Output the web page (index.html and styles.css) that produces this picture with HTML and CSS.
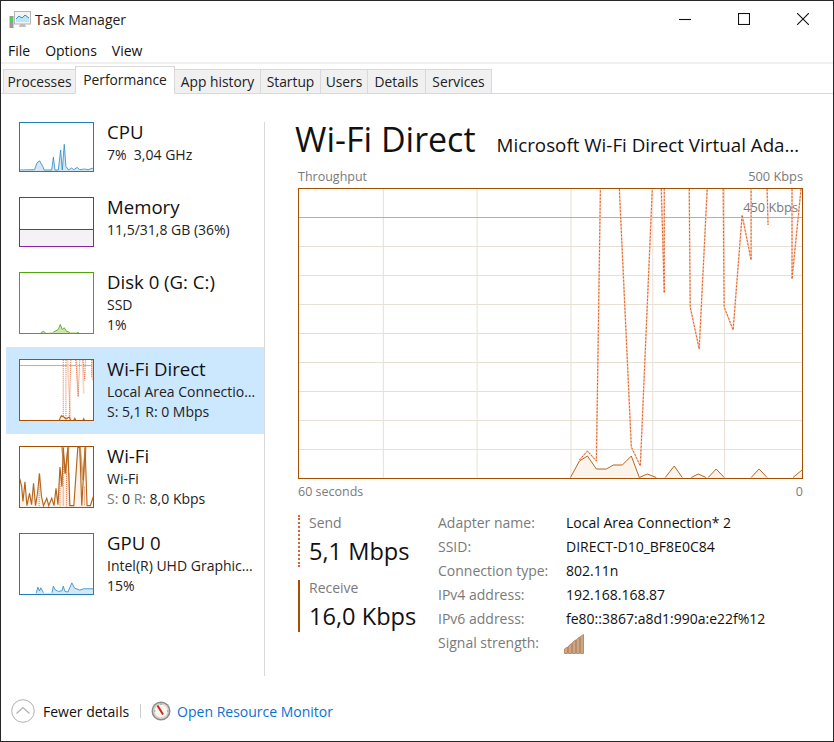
FILE: index.html
```html
<!DOCTYPE html>
<html lang="en">
<head>
<meta charset="utf-8">
<title>Task Manager</title>
<link rel="stylesheet" href="styles.css">
</head>
<body>
<div class="window">
  <header class="titlebar">
    <svg class="app-icon" viewBox="0 0 22 20" aria-hidden="true">
      <rect x="0.5" y="6" width="4" height="12" fill="#9a9a9a"/>
      <rect x="1" y="8" width="3" height="3" fill="#4fd14f"/>
      <rect x="5.5" y="1.5" width="16" height="12.5" fill="#f4f4f4" stroke="#b5b5b5"/>
      <path class="app-screen" d="M7 12V9l3-3 3 2 3-3 4 3v4z"/>
      <path class="app-line" d="M7 9l3-3 3 2 3-3 4 3"/>
      <path class="app-stand" d="M11 14h5l1 3h-7z"/>
    </svg>
    <span class="app-title">Task Manager</span>
    <div class="controls">
      <svg class="ctl" viewBox="0 0 12 12"><path d="M0 6.500h12"/></svg>
      <svg class="ctl" viewBox="0 0 12 12"><rect x="0.5" y="0.5" width="11" height="11"/></svg>
      <svg class="ctl" viewBox="0 0 12 12"><path d="M0 0l12 12M12 0L0 12"/></svg>
    </div>
  </header>
  <nav class="menubar"><span>File</span><span>Options</span><span>View</span></nav>
  <div class="tabs">
    <span class="tab t-processes">Processes</span>
    <span class="tab active t-performance">Performance</span>
    <span class="tab t-apphistory">App history</span>
    <span class="tab t-startup">Startup</span>
    <span class="tab t-users">Users</span>
    <span class="tab t-details">Details</span>
    <span class="tab t-services">Services</span>
  </div>
  <main class="body">
    <aside class="list">
      <div class="item">
        <div class="thumb short blue">
          <svg viewBox="59 368 221 146" preserveAspectRatio="none">
            <path class="fill-blue" d="M58 514 103 510 110 490 118 483 128 500 132 511 155 511 160 472 165 511 175 511 182 450 187 511 193 433 198 500 206 511 215 505 222 510 232 503 240 510 255 508 265 510 280 505 280 514z"/>
            <path class="line-blue" d="M58 511 103 510 110 490 118 483 128 500 132 511 155 511 160 472 165 511 175 511 182 450 187 511 193 433 198 500 206 511 215 505 222 510 232 503 240 510 255 508 265 510 280 505"/>
          </svg>
        </div>
        <div class="info"><div class="name">CPU</div><div class="sub">7%&nbsp; 3,04 GHz</div></div>
      </div>
      <div class="item">
        <div class="thumb short purple"><div class="mem-fill"></div></div>
        <div class="info"><div class="name">Memory</div><div class="sub">11,5/31,8 GB (36%)</div></div>
      </div>
      <div class="item">
        <div class="thumb green">
          <svg viewBox="59 278 221 183" preserveAspectRatio="none">
            <path class="fill-green" d="M122 461 130 456 136 461 160 458 168 454 175 450 181 435 187 450 193 445 200 456 210 459 235 458 240 461z"/>
            <path class="line-green" d="M122 460 130 456 136 460M160 458 168 454 175 450 181 435 187 450 193 445 200 456 210 459M232 460h5"/>
          </svg>
        </div>
        <div class="info"><div class="name">Disk 0 (G: C:)</div><div class="sub">SSD</div><div class="sub">1%</div></div>
      </div>
      <div class="item selected">
        <div class="thumb brown">
          <svg viewBox="59 538 221 183" preserveAspectRatio="none">
            <path class="grid-450" d="M59 555H280"/>
            <path class="pale-thick" d="M203 538 212 720M230 538 236 650M248 538 252 640M278 538V600"/>
            <path class="dash-thick" d="M190 538V718M198 538V718M213 538 208 718M228 538 235 650 240 538M250 538 255 600 257 538M276 538V590"/>
            <path class="fill-brown" d="M178 721 184 708 192 712 198 718 208 712 212 721z"/>
            <path class="line-brown" d="M178 721 184 708 192 712 198 718 208 712 212 721M222 721 225 716 228 721M250 721 252 717 254 721"/>
          </svg>
        </div>
        <div class="info"><div class="name">Wi-Fi Direct</div><div class="sub clip">Local Area Connection* 2</div><div class="sub">S: 5,1 R: 0 Mbps</div></div>
      </div>
      <div class="item">
        <div class="thumb brown">
          <svg viewBox="59 49 221 183" preserveAspectRatio="none">
            <path class="fill-brown" d="M58 232V145L64 170 68 215 74 155 80 228 88 190 94 225 100 160 106 228 112 190 118 130 124 200 130 228 140 205 146 228 155 205 162 228 168 175 174 225 180 110 186 170 190 50 196 130 204 50 210 228 222 228 234 50 240 50 246 228 256 50 262 228 272 228 281 200V232z"/>
            <path class="pale-wide" d="M186 48 196 130 206 48M240 48 250 150 258 48"/>
            <path class="dash-thick" d="M117 130V230M180 120V230M190 110V230M200 120V230M208 130V230M254 170V230"/>
            <path class="line-brown" d="M58 145 64 170 68 215 74 155 80 228 88 190 94 225 100 160 106 228 112 190 118 130 124 200 130 228 140 205 146 228 155 205 162 228 168 175 174 225 180 110 186 170 190 50 196 130 204 50 210 228 222 228 234 50 240 50 246 228 256 50 262 228 272 228 281 200"/>
          </svg>
        </div>
        <div class="info"><div class="name">Wi-Fi</div><div class="sub">Wi-Fi</div><div class="sub"><span class="dim">S:</span> 0 <span class="dim">R:</span> 8,0 Kbps</div></div>
      </div>
      <div class="item">
        <div class="thumb blue">
          <svg viewBox="59 311 221 183" preserveAspectRatio="none">
            <path class="fill-blue" d="M108 495 113 473 118 485 122 475 130 490 156 490 160 470 166 482 176 486 186 484 190 470 195 486 204 488 216 460 224 476 240 482 252 478 280 478V495z"/>
            <path class="line-blue" d="M108 492 113 473 118 485 122 475 130 490M156 490 160 470 166 482 176 486 186 484 190 470 195 486 204 488 216 460 224 476 240 482 252 478 280 478"/>
          </svg>
        </div>
        <div class="info"><div class="name">GPU 0</div><div class="sub clip">Intel(R) UHD Graphics 630</div><div class="sub">15%</div></div>
      </div>
    </aside>
    <div class="divider"></div>
    <section class="panel">
      <div class="heading">
        <h1 class="title">Wi-Fi Direct</h1>
        <div class="subtitle">Microsoft Wi-Fi Direct Virtual Adapter #2</div>
      </div>
      <div class="axis top"><span>Throughput</span><span class="max">500 Kbps</span></div>
      <div class="chart">
        <svg viewBox="299 189 504 289" preserveAspectRatio="none">
          <path class="grid" d="M299 246.500H803M299 275.500H803M299 304.500H803M299 333.500H803M299 362.500H803M299 391.500H803M299 420.500H803M299 449.500H803M383.500 189V478M477.500 189V478M571.500 189V478M653.500 189V478M725.500 189V478"/>
          <path class="grid-450-main" d="M299 217.500H803"/>
          <path class="send-pale" d="M580 460 588 451 597 461 601 189M620 189 632 447 641 466 653 189M662 189 665 293V189M690 189 691 307 700 349 708 189M724 189 725 307 734 330 743 215 752 260V189M768 189 769 225M793 189 793 279 802 189"/>
          <path class="send" d="M580 460 588 451 597 461 601 189M620 189 632 447 641 466 653 189M662 189 665 293V189M690 189 691 307 700 349 708 189M724 189 725 307 734 330 743 215 752 260V189M768 189 769 225M793 189 793 279 802 189"/>
          <path class="recv-fill" d="M571 478 580 461 588 456 597 469 607 469 614 465 623 465 632 456 640 478zM640 478 648 474 657 478zM666 478 675 466 683 478zM692 478 699 474 707 478zM709 478 717 469 725 478zM752 478 760 469 768 478zM794 478 803 470V478z"/>
          <path class="recv" d="M571 477.500 580 461 588 456 597 469 607 469 614 465 623 465 632 456 640 477.500 648 474 657 477.500M666 477.500 675 466 683 477.500M692 477.500 699 474 707 477.500M709 477.500 717 469 725 477.500M752 477.500 760 469 768 477.500M794 477.500 803 470"/>
        </svg>
        <span class="mark">450 Kbps</span>
      </div>
      <div class="axis bottom"><span>60 seconds</span><span>0</span></div>
      <div class="stats">
        <div class="rates">
          <div class="rate send-rate"><div class="rate-label">Send</div><div class="rate-value">5,1 Mbps</div></div>
          <div class="rate recv-rate"><div class="rate-label">Receive</div><div class="rate-value">16,0 Kbps</div></div>
        </div>
        <dl class="props">
          <dt>Adapter name:</dt><dd>Local Area Connection* 2</dd>
          <dt>SSID:</dt><dd>DIRECT-D10_BF8E0C84</dd>
          <dt>Connection type:</dt><dd>802.11n</dd>
          <dt>IPv4 address:</dt><dd>192.168.168.87</dd>
          <dt>IPv6 address:</dt><dd>fe80::3867:a8d1:990a:e22f%12</dd>
          <dt>Signal strength:</dt>
          <dd>
            <svg class="signal" viewBox="0 0 20 20" aria-hidden="true">
              <path d="M0.500 19.500V15l3-2v6.500zM4.500 19.500V12l3-2.500v10zM8.500 19.500V8.500l3-2.500v13.500zM12.500 19.500V5.500l3-2.500v16.500zM16.500 19.500V2.500l3-2v19z"/>
            </svg>
          </dd>
        </dl>
      </div>
    </section>
  </main>
  <footer class="footer">
    <svg class="fewer" viewBox="0 0 24 24" aria-hidden="true">
      <circle cx="12" cy="12" r="11.300"/>
      <path d="M5.500 14.500 12 8.500l6.500 6"/>
    </svg>
    <span class="fewer-text">Fewer details</span>
    <span class="foot-sep"></span>
    <svg class="gauge" viewBox="0 0 20 20" aria-hidden="true">
      <circle class="g1" cx="10" cy="10" r="9.500"/>
      <circle class="g2" cx="10" cy="10" r="8"/>
      <circle class="g3" cx="10" cy="10" r="6.300"/>
      <path class="g-needle" d="M6.500 4.500 12 13.500"/>
      <path class="g-ticks" d="M10 2.500v1.500M3 10h1.500M16 10h1.500"/>
    </svg>
    <a class="monitor" href="#">Open Resource Monitor</a>
  </footer>
</div>
</body>
</html>
```

FILE: styles.css
```css
* { box-sizing: border-box; }
html, body { margin: 0; padding: 0; }
body { background: #fff; font-family: "Open Sans", "Liberation Sans", sans-serif; color: #111; }

.window { width: 834px; height: 742px; border: 1px solid #262626; background: #fff; display: flex; flex-direction: column; overflow: hidden; font-size: 14px; }

svg path { fill: none; }

.titlebar { height: 37px; display: flex; align-items: center; flex: none; }
.app-icon { width: 22px; height: 20px; margin-left: 8px; }
svg path.app-screen { fill: #bfe3f7; }
.app-line { stroke: #2f8fd6; stroke-width: 1; }
svg path.app-stand { fill: #bdbdbd; }
.app-title { margin-left: 4px; color: #222; }
.controls { margin-left: auto; margin-top: -2px; display: flex; gap: 47px; padding-right: 24px; }
.ctl { width: 12px; height: 12px; fill: none; stroke: #111; stroke-width: 1.100; }

.menubar { height: 24px; display: flex; align-items: center; gap: 15px; padding-left: 7px; flex: none; }

.tabs { height: 32px; border-top: 2px solid #f0f0f0; display: flex; align-items: flex-end; padding-left: 2px; flex: none; border-bottom: 1px solid #d9d9d9; font-size: 13.800px; }
.tab { height: 25px; margin-bottom: -1px; display: flex; align-items: center; justify-content: center; background: #f0f0f0; border: 1px solid #d9d9d9; border-left-width: 0; color: #222; white-space: nowrap; }
.tab:first-child { border-left-width: 1px; }
.tab.active { height: 28px; background: #fff; border-bottom-color: #fff; border-left-width: 1px; padding-bottom: 2px; }
.t-processes { width: 73px; }
.t-performance { width: 100px; margin-left: -1px; }
.t-apphistory { width: 86px; }
.t-startup { width: 60px; }
.t-users { width: 47px; }
.t-details { width: 58px; }
.t-services { width: 66px; }

.body { flex: 1; display: flex; padding-top: 16px; min-height: 0; }
.list { width: 258px; margin-left: 5px; flex: none; }
.divider { width: 1px; height: 554px; margin-top: 12px; background: #d9d9d9; flex: none; }

.item { display: flex; align-items: flex-start; padding: 12px 0 13px 13px; gap: 13px; }
.item.selected { background: #cce8ff; }
.thumb { width: 75px; height: 62px; border: 1px solid; flex: none; background: #fff; overflow: hidden; display: flex; flex-direction: column; justify-content: flex-end; }
.thumb.short { height: 50px; }
.thumb svg { width: 100%; height: 100%; display: block; }
.blue { border-color: #1f7db8; }
.purple { border-color: #8b1fa9; }
.green { border-color: #4da60b; }
.brown { border-color: #a74f01; }
.mem-fill { height: 17px; background: #f4f2f4; border-top: 1px solid #8b1fa9; }

.info { min-width: 0; flex: 1; padding-right: 6px; margin: -3px 0 -4px; }
.name { font-size: 18.600px; line-height: 26px; color: #111; white-space: nowrap; }
.sub { line-height: 20px; color: #222; white-space: nowrap; }
.clip { overflow: hidden; text-overflow: ellipsis; }
.dim { color: #7c7c7c; }

.thumb path.fill-blue { fill: #d5e7f3; }
.line-blue { stroke: #2e8bc7; stroke-width: 2.500; }
.thumb path.fill-green { fill: #cde5b4; }
.line-green { stroke: #4da60b; stroke-width: 2.500; }
.thumb path.fill-brown { fill: #fcf3ea; }
.line-brown { stroke: #b5651d; stroke-width: 3.500; }
.grid-450 { stroke: #d2a67f; stroke-width: 3; }
.pale-thick { stroke: #f6d4c2; stroke-width: 5; }
.pale-wide { stroke: #d8a777; stroke-width: 6; }
.dash-thick { stroke: #e0703c; stroke-width: 3; stroke-dasharray: 3 3; }

.panel { flex: 1; min-width: 0; padding: 0 30px 0 33px; display: flex; flex-direction: column; }
.heading { height: 58px; display: flex; align-items: baseline; gap: 21px; flex: none; }
.title { margin: 0 0 0 -3px; font-size: 34px; font-weight: 400; line-height: 58px; color: #111; white-space: nowrap; flex: none; }
.subtitle { font-size: 18.800px; color: #111; white-space: nowrap; overflow: hidden; text-overflow: ellipsis; min-width: 0; }

.axis { display: flex; justify-content: space-between; font-size: 12.500px; color: #7a7a7a; flex: none; }
.axis.top { height: 20px; line-height: 17px; }
.axis.bottom { height: 36px; line-height: 25px; }
.max { font-size: 12.800px; }
.chart { position: relative; height: 291px; border: 1px solid #a74f01; flex: none; }
.chart svg { display: block; width: 100%; height: 100%; }
.grid { stroke: #e8dfd4; stroke-width: 1; }
.grid-450-main { stroke: #cda98a; stroke-width: 1; }
.send-pale { stroke: #f7cdb6; stroke-width: 1.600; }
.send { stroke: #e0622a; stroke-width: 1; stroke-dasharray: 2 1.500; }
.chart path.recv-fill { fill: #fcf3ea; }
.recv { stroke: #b5651d; stroke-width: 1; }
.mark { position: absolute; top: 10px; right: 4px; font-size: 12.800px; line-height: 16px; color: #7a7a7a; }

.stats { display: flex; flex: none; }
.rates { width: 140px; flex: none; display: flex; flex-direction: column; gap: 13px; }
.rate { height: 52px; padding-left: 9px; border-left: 2px solid #a74f01; }
.send-rate { border-left-style: dotted; border-left-color: #e0622a; }
.rate-label { font-size: 14px; line-height: 15px; color: #7a7a7a; }
.rate-value { font-size: 23.600px; line-height: 36px; margin-top: 3px; color: #111; white-space: nowrap; }
.props { margin: 0; display: grid; grid-template-columns: 128px auto; grid-auto-rows: 24px; align-content: start; }
.props dt { color: #7a7a7a; line-height: 16px; }
.props dd { margin: 0; line-height: 16px; color: #111; white-space: nowrap; }
.signal { display: block; width: 20px; height: 20px; margin: -1px 0 0 -2px; }
svg.signal path { fill: #cda686; stroke: #b88d68; stroke-width: 1; }

.footer { height: 60px; flex: none; display: flex; align-items: center; padding: 0 0 0 10px; }
.fewer { width: 24px; height: 24px; flex: none; }
.fewer circle { fill: #fff; stroke: #b0b0b0; stroke-width: 1; }
.fewer path { stroke: #b0b0b0; stroke-width: 1.200; }
.fewer-text { margin-left: 8px; color: #111; white-space: nowrap; }
.foot-sep { width: 1px; height: 14px; background: #ccc; margin-left: 11px; flex: none; }
.gauge { width: 20px; height: 20px; margin-left: 10px; flex: none; }
.g1 { fill: #8f8a84; }
.g2 { fill: #d9d4cc; }
.g3 { fill: #faf7f2; }
.g-needle { stroke: #c8281e; stroke-width: 2; }
.g-ticks { stroke: #777; stroke-width: 0.800; }
.monitor { margin-left: 6px; color: #0a6fd8; text-decoration: none; white-space: nowrap; }
```
